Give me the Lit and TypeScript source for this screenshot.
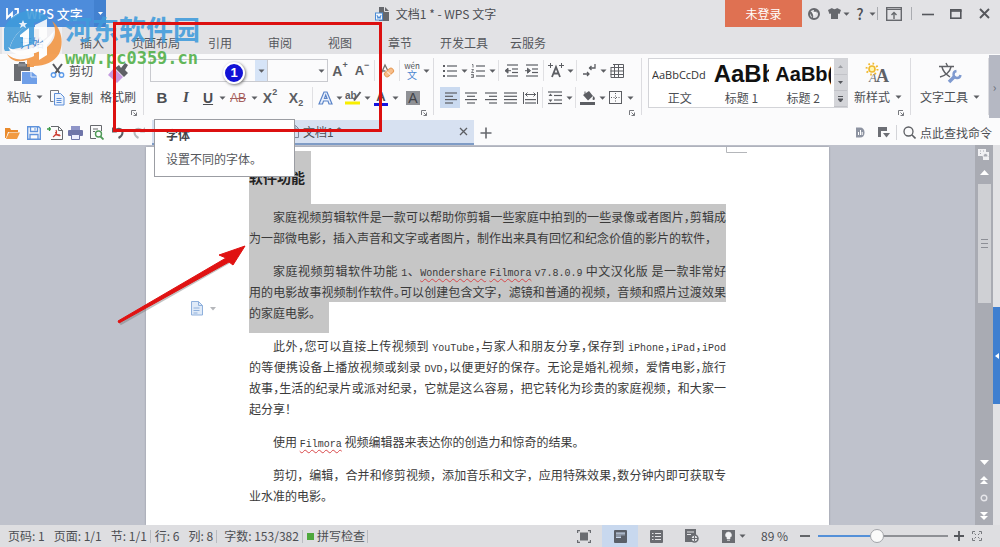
import { LitElement, html, svg, css, TemplateResult } from "lit";
import { customElement } from "lit/decorators.js";

type Icon = TemplateResult;

const box = (w: number, h: number, body: Icon) =>
  html`<svg width=${w} height=${h} viewBox="0 0 ${w} ${h}" fill="none" aria-hidden="true">${body}</svg>`;

const G = "#5c5e63";
const BLUE = "#5b84c8";

const lines = (rows: number[][]) =>
  rows.map(([x1, x2, y]) => svg`<path d="M${x1} ${y}H${x2}" stroke=${G} stroke-width="1.2"/>`);

const caret = box(7, 4, svg`<path d="M0.5 0.5h6L3.5 3.8z" fill="#5c5e63"/>`);
const launcherIcon = box(6, 6, svg`<path d="M0.5 5V0.5H5M2.5 5.5h3v-3M2.5 2.5l3 3" stroke="#77797e"/>`);

const icons = {
  wps: box(14, 12, svg`<path d="M1 0v10l5-5v5l6-4.500V1H8.500" stroke="#fff" stroke-width="1.8"/>`),
  paste: box(24, 24, svg`
    <path d="M1 3h5V1h6v2h5v7H8v10H1z" fill="#6b6d72"/><path d="M5 2.500h8v3H5z" fill="#8b8d92"/>
    <path d="M9 11h10l5 4v8H9z" fill="#6f9fe8"/><path d="M18 11v5h6" stroke="#dfe9fa"/>`),
  cut: box(15, 15, svg`
    <path d="M3 1l7 9.500M12 1L5 10.500" stroke="#55575c" stroke-width="2"/>
    <circle cx="3.500" cy="12" r="2.200" stroke="#5d9bea" stroke-width="1.400"/><circle cx="11.500" cy="12" r="2.200" stroke="#5d9bea" stroke-width="1.400"/>`),
  copy: box(15, 16, svg`
    <path d="M3.500 11.500h-3v-11h8v3" stroke="#76797f"/><path d="M4.500 3.500h6l3.500 3.500v8H4.500z" fill="#eaf2fd" stroke="#5d8fd8"/>
    <path d="M6.500 8.500h5M6.500 10.500h5M6.500 12.500h5" stroke="#5d8fd8"/>`),
  brush: box(24, 24, svg`
    <path d="M9 7l4-3 2 3 4-5 3 2-3 5 3 3-4 4z" fill="#5f6166"/><path d="M8 7l9 9-6 6-9-8z" fill="#c59be0"/>`),
  eraser: box(16, 16, svg`
    <path d="M2 11L6 2l2.500 5M3.500 8h3" stroke="#77706a" stroke-width="1.300"/><rect x="5" y="7" width="10" height="5" rx="2" transform="rotate(-42 10 9.500)" fill="#f7bd8a" stroke="#e69a55"/><path d="M8 8.500l4 4" stroke="#fff"/>`),
  pinyin: html`<span class="pinyin"><span>wén</span><span class="blue">文</span></span>`,
  bullets: box(14, 14, svg`${lines([[4, 14, 2], [4, 14, 7], [4, 14, 12]])}<path d="M0 2h2M0 7h2M0 12h2" stroke=${G} stroke-width="2"/>`),
  numbers: box(14, 14, svg`${lines([[5, 14, 2], [5, 14, 7], [5, 14, 12]])}<path d="M1 0.500h1v3M0.500 5.500h2l-2 3h2.500M0 10.500h2.500v3H0M0.500 12h2" stroke=${G} stroke-width=".8"/>`),
  outdent: box(13, 14, svg`${lines([[2, 13, 1], [7, 13, 5], [7, 13, 8.500], [2, 13, 12]])}<path d="M0 6.700l3-2.500v5zM3 6.700h3" fill=${G} stroke=${G}/>`),
  indent: box(13, 14, svg`${lines([[1, 13, 1], [7, 13, 5], [7, 13, 8.500], [1, 13, 12]])}<path d="M5.500 6.700l-3-2.500v5zM0 6.700h3" fill=${G} stroke=${G}/>`),
  scaleText: box(16, 15, svg`<path d="M4 14L8 4l4 10M5.500 10.500h5" stroke=${G} stroke-width="1.800"/><path d="M0 2.500h5M2.500 0v5M11 2.500h5M13.500 0v5" stroke=${G}/>`),
  wrap: box(13, 14, svg`<path d="M12 0v4H6M8.500 2L6.500 4l2 2M0 10h6M4 8l2 2-2 2" stroke=${G} stroke-width="1.300"/>`),
  table: box(14, 14, svg`<path d="M4.500 0.500v13M8.500 0.500v13M0.500 3.500h13M0.500 7h13M0.500 10.500h13M3 0.500h10.500v13H1V4" stroke=${G}/>`),
  left: box(13, 12, svg`${lines([[1, 13, 1], [1, 9, 4.300], [1, 13, 7.600], [1, 9, 11]])}`),
  center: box(13, 12, svg`${lines([[1, 13, 1], [3, 11, 4.300], [1, 13, 7.600], [3, 11, 11]])}`),
  right: box(13, 12, svg`${lines([[1, 13, 1], [5, 13, 4.300], [1, 13, 7.600], [5, 13, 11]])}`),
  justify: box(13, 12, svg`${lines([[0, 13, 1], [0, 13, 4.300], [0, 13, 7.600], [0, 13, 11]])}`),
  spread: box(15, 12, svg`${lines([[2, 13, 7.600], [2, 13, 11]])}<path d="M0.500 0v12M14.500 0v12M2 2.500h11M4.500 0.500l-2 2 2 2M10.500 0.500l2 2-2 2" stroke=${G}/>`),
  spacing: box(14, 14, svg`${lines([[0, 14, 1], [6, 14, 4.500], [6, 14, 9], [0, 14, 12.500]])}<path d="M2.500 2.500l2 2.500h-4zM2.500 11l2-2.500h-4z" fill=${G}/>`),
  bucket: box(16, 15, svg`<path d="M3 5l6-4 4 5-5 4.500z" fill=${G}/><path d="M5 6V1.500" stroke=${G}/><path d="M13.500 6c2 2 1.500 4 0 4s-1-2 0-4z" fill=${G}/><rect y="12" width="15" height="3" fill=${G}/>`),
  border: box(14, 14, svg`<rect x=".5" y=".5" width="12" height="12" stroke=${G}/><path d="M6.500 2v10M2 6.500h10" stroke=${G} stroke-dasharray="1 1.500"/>`),
  outlineA: box(15, 14, svg`<path d="M1 13L6 1h3l5 12h-3l-1-3H5.500l-1 3zM6.500 7.500h2.500L7.700 4z" fill="#e9f0fc" stroke=${BLUE} stroke-width="1.200"/>`),
  marker: box(17, 15, svg`<text x="0" y="9" font-family="Liberation Sans" font-size="10" font-weight="700" fill=${G}>ab</text><path d="M15.500 2L9 10.500" stroke=${G} stroke-width="2"/><rect y="11.500" width="15" height="3" fill="#f8ee00"/>`),
  newStyle: box(26, 22, svg`
    <text x="11" y="20" font-family="Liberation Serif" font-size="18" font-weight="700" fill="#5f6166">A</text>
    <text x="4" y="20" font-family="Liberation Serif" font-size="13" font-style="italic" fill="#6a6c70">A</text>
    <circle cx="7" cy="7" r="3" fill="#fff6b0" stroke="#f0b92e" stroke-width="1.600"/>
    <circle cx="7" cy="7" r="5.500" stroke="#f0b92e" stroke-width="2" stroke-dasharray="1.600 2.700"/>`),
  textTool: box(24, 22, svg`
    <path d="M1 4.500h15M8 1l1.500 3M4 5c1 5 5 8 8 10M13 5c-1 5-6 9-11 10" stroke="#5f6166" stroke-width="1.400"/>
    <path d="M11 20l6-6" stroke="#7f9ad0" stroke-width="3.500"/><path d="M18.500 9a3.500 3.500 0 1 0 4 4" stroke="#7f9ad0" stroke-width="2.400"/>`),
  folder: box(15, 12, svg`<path d="M0 1h5l1 2h7v2H3l-2 6H0z" fill="#e98a2c"/><path d="M4 5.500h11L12 12H1z" fill="#f29b42"/>`),
  save: box(14, 14, svg`<path d="M.7.700h11l1.600 1.600v11H.7z" stroke="#5f93dc" stroke-width="1.400"/><path d="M3.500 1v4.500h7V1M3 13V8.500h8V13" stroke="#5f93dc" stroke-width="1.300"/><path d="M8 2v2.500" stroke="#5f93dc"/>`),
  pdf: box(16, 14, svg`<path d="M4 .5h7.500l4 4v9H4M11.500.5v4h4" stroke="#66686d"/><path d="M0 3h4M2.500 1v4" stroke="#3d9a48" stroke-width="1.300"/><path d="M6 11c3-2 4-5 3-7M8.500 6c1 3 3 4 5 3.500M7 9.500c2-1 4-1 6-.5" stroke="#cc3f35" stroke-width="1.200"/>`),
  print: box(15, 14, svg`<path d="M3 0h9v4H3z" fill="#8f95c8"/><rect y="4" width="15" height="6" rx="1" fill="#6f75a9"/><path d="M3.500 8.500h8v5h-8z" fill="#eef" stroke="#6f75a9"/>`),
  preview: box(14, 15, svg`<path d="M6 13.500H.5V.5h11V6M3 4h5M3 6.500h2" stroke="#66686d"/><circle cx="8.500" cy="9" r="3" stroke="#4f9a57" stroke-width="1.400"/><path d="M10.500 11.500l3 3" stroke="#4f9a57" stroke-width="1.800"/>`),
  undo: box(14, 13, svg`<path d="M1 1v5.500h5z" fill=${G}/><path d="M3 5c4-4 9-2 8.500 2-.2 2.500-2 4-4 5" stroke=${G} stroke-width="2"/>`),
  redo: box(14, 13, svg`<path d="M13 1v5.500H8z" fill="#b7b9bd"/><path d="M11 5C7 1 2 3 2.500 7c.2 2.500 2 4 4 5" stroke="#b7b9bd" stroke-width="2"/>`),
  docIcon: box(10, 13, svg`<path d="M.5.5h6l3 3v9h-9zM6 .5V4h3.500" stroke="#7c8698"/>`),
  close: box(9, 9, svg`<path d="M1 1l7 7M8 1L1 8" stroke="#5c5e63" stroke-width="1.300"/>`),
  plus: box(12, 12, svg`<path d="M6 0.500v11M0.500 6h11" stroke="#66686d" stroke-width="1.600"/>`),
  dBadge: box(10, 11, svg`<path d="M1 .5h4c3 0 4.500 2 4.500 5s-1.500 5-4.500 5H1z" fill="#8d93a1"/><path d="M3.500 8V5M5.500 8V3M7.200 8V5" stroke="#fff"/>`),
  flag: box(12, 11, svg`<path d="M0 0h9v4H3v6H0z" fill="#6d6f75"/><path d="M5 6h7l-3.500 4.500z" fill="#6d6f75"/>`),
  search: box(13, 13, svg`<circle cx="5.500" cy="5.500" r="4.500" stroke=${G} stroke-width="1.300"/><path d="M8.800 8.800l3.700 3.700" stroke=${G} stroke-width="1.600"/>`),
  titleDoc: box(14, 14, svg`<path d="M4 0h6l4 4v10H4z" fill="#66686d"/><path d="M9.500 0v4.500H14" stroke="#e2e2e5"/><rect x=".5" y="6" width="7" height="7" fill="#f3f7fd" stroke="#4a8bd6"/><path d="M2 8l1 3.500 1-2 1 2L6 8" stroke="#4a8bd6"/>`),
  globe: box(12, 12, svg`<circle cx="6" cy="6" r="5" stroke="#66686d" stroke-width="2"/><path d="M1 3.500l4 1.500L4.500 10M7 1l-1 3h5" fill="#66686d" stroke="#66686d"/><path d="M3.500 3.800h5.500L6 8.500z" fill="#f2f2f4"/>`),
  shirt: box(13, 11, svg`<path d="M4 0c1 1.500 4 1.500 5 0l4 2-1.500 4-1.500-.5V11H3V5.500L1.500 6 0 2z" fill="#66686d"/>`),
  ribbonUp: box(16, 14, svg`<rect x=".7" y=".7" width="14.600" height="12.600" stroke="#66686d" stroke-width="1.400"/><path d="M0 2.500h16" stroke="#66686d"/><path d="M8 12V6M5.500 8L8 5.500 10.500 8" stroke="#66686d" stroke-width="1.400"/>`),
  min: box(12, 10, svg`<path d="M0 5.500h12" stroke="#55575c" stroke-width="1.600"/>`),
  max: box(12, 10, svg`<rect x=".8" y=".8" width="10" height="8.400" stroke="#55575c" stroke-width="1.600"/><path d="M0 2h11.600" stroke="#55575c" stroke-width="1.600"/>`),
  exit: box(11, 11, svg`<path d="M1 1l9 9M10 1l-9 9" stroke="#55575c" stroke-width="1.900"/>`),
  full: box(14, 13, svg`<rect x="3" y="2.500" width="8" height="8" fill="#6a6c71"/><path d="M.6 3V.6H3M11 .6h2.400V3M13.400 10v2.400H11M3 12.400H.6V10" stroke="#6a6c71" stroke-width="1.200"/>`),
  page: box(13, 13, svg`<rect width="13" height="13" rx="1" fill="#5a5f68"/><path d="M2 3h9v2.500H7v2H2z" fill="#8d97a6"/><path d="M2 3h9M2 7.500h5" stroke="#c9d8ec"/>`),
  outline: box(13, 13, svg`<rect width="13" height="13" rx="1" fill="#6a6c71"/><path d="M2 3.500h1.500M5 3.500h6M2 6.500h1.500M5 6.500h6M2 9.500h1.500M5 9.500h6" stroke="#e4e4e7" stroke-width="1.200"/>`),
  web: box(14, 14, svg`<path d="M0 0h11v13H0z" fill="#6a6c71"/><path d="M2 3h7M2 5.500h4" stroke="#e4e4e7"/><circle cx="9.500" cy="9.500" r="3.500" fill="#e4e4e7" stroke="#6a6c71" stroke-width="1.500"/><path d="M6 9.500h7M9.500 7v5" stroke="#6a6c71"/>`),
  bulb: box(13, 13, svg`<rect width="13" height="13" fill="#6a6c71"/><path d="M6.500 2a3 3 0 0 1 1.500 5.600V9H5V7.600A3 3 0 0 1 6.500 2zM5 10.500h3" fill="#f2f2f4" stroke="#f2f2f4" stroke-width=".6"/>`),
  minus: box(10, 10, svg`<path d="M0 5h10" stroke="#55575c" stroke-width="1.800"/>`),
  plusBold: box(10, 10, svg`<path d="M0 5h10M5 0v10" stroke="#55575c" stroke-width="1.800"/>`),
  expand: box(10, 10, svg`<path d="M.5 3V.5H3M7 .5h2.500V3M9.500 7v2.500H7M3 9.500H.5V7M2.500 2.500l1.500 1.500M7.500 2.500L6 4M7.500 7.500L6 6M2.500 7.500L4 6" stroke="#77797e"/>`),
  region: box(12, 11, svg`<path d="M0 0h8v3h3v4H0z" fill="#f0f0f3"/><path d="M2 2h1M5 2h1M2 4.500h1" stroke="#a8aab2"/><circle cx="7.500" cy="7" r="2.500" fill="#a8aab2" stroke="#f0f0f3"/><path d="M5 7.500h6V11H5z" fill="#f0f0f3"/>`),
  up: box(9, 5, svg`<path d="M4.500 0L9 5H0z" fill="#fff"/>`),
  down: box(9, 5, svg`<path d="M4.500 5L9 0H0z" fill="#fff"/>`),
  pageUp: box(8, 8, svg`<path d="M4 0l4 4H0zM4 4l4 4H0z" fill="#fff"/>`),
  pageDown: box(8, 8, svg`<path d="M4 8l4-4H0zM4 4l4-4H0z" fill="#fff"/>`),
  ring: box(8, 8, svg`<circle cx="4" cy="4" r="2.800" stroke="#e6e6ea" stroke-width="1.400"/>`),
  sideArrow: box(4, 6, svg`<path d="M0 3l4-3v6z" fill="#fff"/>`),
  pasteOption: box(13, 15, svg`<path d="M.5.500h7l4 4v9.500H.5z" fill="#dfeaf8" stroke="#8fb0dc"/><path d="M7.500.5v4h4M2.500 7h6M2.500 9.500h6M2.500 12h4" stroke="#8fb0dc"/>`),
  crop: box(21, 6, svg`<path d="M.5 0v5.500H21" stroke="#b4b6ba"/>`),
};

const base = css`
  * { box-sizing: border-box; }
  svg { display: block; flex: none; }
  button {
    display: flex; align-items: center; justify-content: center;
    margin: 0; padding: 0; border: 0; background: none;
    font: inherit; color: inherit; white-space: nowrap;
  }
`;

@customElement("title-bar")
class TitleBar extends LitElement {
  static styles = [base, css`
    :host { display: flex; align-items: center; height: 27px; background: #e2e2e5; color: #4c4e53; }
    .app { height: 27px; width: 106px; gap: 6px; padding-left: 6px; justify-content: flex-start; background: #4d8cdb; color: #fff; font-size: 13px; font-weight: 500; }
    .app .tail { margin-left: auto; align-self: stretch; width: 12px; display: flex; align-items: center; justify-content: center; background: #4281d0; }
    .name { flex: 1; display: flex; gap: 7px; align-items: center; justify-content: center; padding-left: 40px; }
    .login { align-self: stretch; width: 77px; background: #df7152; color: #fff; }
    .i { width: 16px; height: 27px; }
    .wide { width: 32px; }
    .mid { width: 24px; }
    .dd { width: 8px; height: 27px; }
    .help { margin-left: 2px; font-size: 15px; font-weight: 500; }
    .bar { width: 1px; height: 13px; margin-left: 1px; background: #a9abb0; }
  `];
  render() {
    return html`
      <button class="app">${icons.wps}<span>WPS 文字</span><span class="tail">${box(5, 3, svg`<path d="M0 0h5L2.500 3z" fill="#fff"/>`)}</span></button>
      <div class="name">${icons.titleDoc}<span>文档1 * - WPS 文字</span></div>
      <button class="login">未登录</button>
      <button class="i mid" aria-label="在线">${icons.globe}</button>
      <button class="i" aria-label="皮肤">${icons.shirt}</button><button class="dd" aria-label="皮肤选项">${caret}</button>
      <button class="i help" aria-label="帮助">?</button><button class="dd" aria-label="帮助选项">${caret}</button>
      <span class="bar"></span>
      <button class="i wide" aria-label="隐藏功能区">${icons.ribbonUp}</button>
      <span class="bar"></span>
      <button class="i wide" aria-label="最小化">${icons.min}</button>
      <button class="i mid" aria-label="最大化">${icons.max}</button>
      <button class="i wide" aria-label="关闭">${icons.exit}</button>`;
  }
}

@customElement("menu-tabs")
class MenuTabs extends LitElement {
  static styles = [base, css`
    :host { display: block; background: #e2e2e5; color: #55575c; padding-left: 2px; }
    nav { display: flex; height: 27px; }
    button { min-width: 60px; padding: 0 10px; padding-top: 4px; }
    .on { background: #efeff2; color: #4a86d0; }
  `];
  render() {
    const tabs = ["开始", "插入", "页面布局", "引用", "审阅", "视图", "章节", "开发工具", "云服务"];
    return html`<nav>${tabs.map((t, i) => html`<button class=${i === 0 ? "on" : ""}>${t}</button>`)}</nav>`;
  }
}

const tool = (label: string, icon: unknown, cls = "") =>
  html`<button class="t ${cls}" aria-label=${label} title=${label}>${icon}</button>`;
const more = (label: string) => html`<button class="dd" aria-label="${label}选项">${caret}</button>`;
const sep = html`<span class="sep"></span>`;

@customElement("tool-ribbon")
class ToolRibbon extends LitElement {
  static styles = [base, css`
    :host { display: flex; height: 66px; background: #fbfbfc; color: #4c4e53; }
    .group { position: relative; display: flex; padding-top: 3px; }
    .group::after { content: ""; position: absolute; right: 0; top: 4px; bottom: 5px; width: 1px; background: #dcdce0; }
    .launch { position: absolute; right: 7px; bottom: 4px; }
    .row { display: flex; align-items: center; height: 27px; }
    .t { width: 20px; height: 21px; }
    .w24 { width: 24px; }
    .w28 { width: 28px; }
    .dd { width: 8px; height: 21px; }
    .on { background: #cadaf0; }
    .sep { width: 1px; height: 21px; margin: 0 2px; background: #e0e0e3; }
    .big { flex-direction: column; height: 54px; justify-content: flex-start; }
    .big .pic { height: 31px; display: flex; align-items: center; }
    .big .cap { display: flex; align-items: center; gap: 5px; line-height: 18px; }
    .clip { padding-left: 7px; padding-right: 8px; gap: 7px; }
    .clip .big { width: 36px; }
    .clip .row { gap: 4px; }
    .font { padding-left: 6px; padding-right: 4px; }
    .para { padding-left: 6px; padding-right: 8px; }
    .styles { padding-left: 6px; padding-right: 9px; gap: 6px; }
    .tools { padding-left: 9px; padding-right: 9px; }
    .combo { position: relative; width: 118px; height: 23px; border: 1px solid #c9cacf; background: #fbfbfc; }
    .size { width: 60px; border-left: 0; }
    .combo select { appearance: none; width: 100%; height: 100%; border: 0; background: none; font: inherit; padding: 0 4px; }
    .combo .arrow { position: absolute; right: 0; top: 0; bottom: 0; width: 12px; display: flex; align-items: center; justify-content: center; pointer-events: none; }
    .combo .hot { background: #d6e4f7; }
    .bold { font: 700 15px "Liberation Sans", sans-serif; }
    .italic { font: italic 700 15px "Liberation Serif", serif; }
    .under { font: 700 14px "Liberation Sans", sans-serif; text-decoration: underline; }
    .strike { font: 12px "Liberation Sans", sans-serif; text-decoration: line-through; color: #a6605c; }
    .let { font: 700 14px "Liberation Sans", sans-serif; color: #5c5e63; }
    .let small { font-size: 9px; align-self: flex-start; }
    .let .low { align-self: flex-end; }
    .smaller { font-size: 13px; }
    .inked { border-bottom: 3px solid #1414e0; padding: 0 2px; font: 700 13px/13px "Liberation Sans", sans-serif; }
    .shade { background: #8f9196; padding: 0 2px; font: 14px/14px "Liberation Sans", sans-serif; color: #404247; }
    .pinyin { display: flex; flex-direction: column; align-items: center; font-size: 8px; line-height: 8px; }
    .pinyin .blue { color: #4a86d0; font-size: 10px; line-height: 10px; }
    .gallery { display: flex; width: 200px; height: 50px; margin-top: 1px; border: 1px solid #d3d4d8; background: #fff; }
    .style { flex: 1; flex-direction: column; justify-content: flex-end; overflow: hidden; padding: 0 3px; }
    .style .demo { width: 100%; height: 30px; display: flex; align-items: center; overflow: hidden; color: #111; font: 700 20px "Liberation Sans", sans-serif; }
    .style:nth-child(1) .demo { color: #333; font: 11px "Open Sans", sans-serif; }
    .style:nth-child(2) .demo { font-size: 24px; }
    .style .nm { line-height: 18px; }
    .scroll { width: 13px; display: flex; flex-direction: column; background: #d4d5d9; }
    .scroll button { flex: 1; border-bottom: 1px solid #c2c3c8; }
    .edge { margin-left: auto; width: 13px; height: 63px; margin-top: 1px; background: #b5b8c3; color: #6b6e78; }
  `];
  private launch(label: string) {
    return html`<button class="launch" aria-label=${label}>${launcherIcon}</button>`;
  }
  render() {
    const chars = [["AaBbCcDd", "正文"], ["AaBb", "标题 1"], ["AaBb(", "标题 2"]];
    return html`
      <div class="group clip">
        <button class="big"><span class="pic">${icons.paste}</span><span class="cap">粘贴${caret}</span></button>
        <div>
          <button class="row">${icons.cut}<span>剪切</span></button>
          <button class="row">${icons.copy}<span>复制</span></button>
        </div>
        <button class="big"><span class="pic">${icons.brush}</span><span class="cap">格式刷</span></button>
        ${this.launch("剪贴板设置")}
      </div>
      <div class="group font">
        <div>
          <div class="row">
            <span class="combo"><select aria-label="字体"><option></option></select><span class="arrow hot">${caret}</span></span>
            <span class="combo size"><select aria-label="字号"><option></option></select><span class="arrow">${caret}</span></span>
            ${tool("增大字号", html`A<small>+</small>`, "w24 let")}${tool("缩小字号", html`A<small>−</small>`, "let smaller")}
            ${sep}${tool("清除格式", icons.eraser)}${sep}${tool("拼音指南", icons.pinyin)}${more("拼音指南")}
          </div>
          <div class="row">
            ${tool("加粗", "B", "w24 bold")}${tool("倾斜", "I", "w24 italic")}${tool("下划线", "U", "under")}${more("下划线")}
            ${tool("删除线", "AB", "w24 strike")}${more("删除线")}
            ${tool("上标", html`X<small>2</small>`, "w24 let")}${tool("下标", html`X<small class="low">2</small>`, "w28 let")}
            ${sep}${tool("文字效果", icons.outlineA)}${more("文字效果")}${tool("突出显示", icons.marker)}${more("突出显示")}
            ${tool("字体颜色", html`<span class="inked">A</span>`)}${more("字体颜色")}${tool("字符底纹", html`<span class="shade">A</span>`, "w28")}
          </div>
        </div>
        ${this.launch("字体设置")}
      </div>
      <div class="group para">
        <div>
          <div class="row">
            ${tool("项目符号", icons.bullets)}${more("项目符号")}${tool("编号", icons.numbers)}${more("编号")}${sep}
            ${tool("减少缩进", icons.outdent)}${tool("增加缩进", icons.indent)}${sep}
            ${tool("中文版式", icons.scaleText)}${more("中文版式")}${sep}
            ${tool("显示标记", icons.wrap)}${more("显示标记")}${tool("插入表格", icons.table)}
          </div>
          <div class="row">
            ${tool("左对齐", icons.left, "on")}${tool("居中", icons.center)}${tool("右对齐", icons.right)}${tool("两端对齐", icons.justify)}${tool("分散对齐", icons.spread)}${sep}
            ${tool("行距", icons.spacing)}${more("行距")}${sep}
            ${tool("底纹颜色", icons.bucket)}${more("底纹颜色")}${tool("边框", icons.border)}${more("边框")}
          </div>
        </div>
        ${this.launch("段落设置")}
      </div>
      <div class="group styles">
        <div class="gallery">
          ${chars.map(([demo, nm]) => html`<button class="style"><span class="demo">${demo}</span><span class="nm">${nm}</span></button>`)}
          <div class="scroll">
            <button aria-label="上一行">${box(5, 3, svg`<path d="M2.500 0L5 3H0z" fill="#9c9ea3"/>`)}</button>
            <button aria-label="下一行">${box(5, 3, svg`<path d="M2.500 3L5 0H0z" fill="#55575c"/>`)}</button>
            <button aria-label="更多样式">${box(5, 6, svg`<path d="M0 .5h5M2.500 6L5 3H0z" fill="#55575c" stroke="#55575c"/>`)}</button>
          </div>
        </div>
        <button class="big"><span class="pic">${icons.newStyle}</span><span class="cap">新样式${caret}</span></button>
        ${this.launch("样式设置")}
      </div>
      <div class="group tools">
        <button class="big"><span class="pic">${icons.textTool}</span><span class="cap">文字工具${caret}</span></button>
      </div>
      <button class="edge" aria-label="更多功能">›</button>`;
  }
}

@customElement("quick-bar")
class QuickBar extends LitElement {
  static styles = [base, css`
    :host { display: flex; align-items: center; height: 25px; background: #fbfbfc; color: #4c4e53; padding-left: 2px; padding-right: 8px; }
    .q { width: 21px; height: 25px; }
    .tab { align-self: stretch; display: flex; align-items: center; gap: 4px; width: 322px; margin-left: 3px; padding-left: 137px; padding-right: 6px; background: #d7e1f1; border-bottom: 2px solid #7f9cc6; }
    .tab .x { margin-left: auto; width: 9px; }
    .fill { flex: 1; }
    .r { width: 24px; height: 25px; }
    .bar { width: 1px; height: 15px; background: #d3d4d8; }
    .find { gap: 4px; padding-left: 6px; }
  `];
  render() {
    const q: [string, unknown][] = [["打开", icons.folder], ["保存", icons.save], ["输出为PDF", icons.pdf], ["打印", icons.print], ["打印预览", icons.preview], ["撤销", icons.undo], ["恢复", icons.redo]];
    return html`
      ${q.map(([l, i]) => html`<button class="q" aria-label=${l}>${i}</button>`)}
      <div class="tab">${icons.docIcon}<span>文档1 *</span><button class="x" aria-label="关闭文档">${icons.close}</button></div>
      <button class="r" aria-label="新建文档">${icons.plus}</button>
      <span class="fill"></span>
      <button class="r" aria-label="文档助手">${icons.dBadge}</button>
      <button class="r" aria-label="切换窗口">${icons.flag}</button>
      <span class="bar"></span>
      <button class="find">${icons.search}<span>点此查找命令</span></button>`;
  }
}

const c = html`<span class="half">，</span>`;
const en = (t: string) => html`<span class="en">${t}</span>`;
const bad = (t: string) => html`<span class="en bad">${t}</span>`;

@customElement("doc-area")
class DocArea extends LitElement {
  static styles = [base, css`
    :host { display: flex; min-height: 0; overflow: hidden; background: #bfc2cc; }
    .desk { flex: 1; min-width: 0; display: flex; justify-content: center; padding-top: 2px; }
    .paper { position: relative; width: 683px; flex: none; padding: 4px 103px 0; background: #fff; color: #3a3a3a; box-shadow: 0 0 2px #8f929c; }
    h1 { margin: 0; width: 62px; height: 53px; font-size: 14px; font-weight: 700; line-height: 53px; background: #c6c6c6; white-space: nowrap; color: #222; }
    p { margin: 0 0 12px; line-height: 21px; }
    .ln { display: block; height: 21px; white-space: nowrap; }
    .ln:first-child { padding-left: 24px; }
    .ln:not(:last-child) { text-align-last: justify; }
    .sel { background: #c6c6c6; }
    .first { padding: 2px 0 12px; margin: 0; }
    .second { margin-bottom: 2px; }
    .tail { width: 80px; height: 31px; }
    .half { font-feature-settings: "halt"; }
    .en { font-family: "Liberation Mono", monospace; font-size: 10px; line-height: 10px; }
    .bad { text-decoration: underline wavy #d8484a 1px; text-underline-offset: 2px; }
    .opt { position: absolute; left: 45px; top: 154px; gap: 6px; }
    .crop { position: absolute; right: 82px; top: 0; }
    .scroll { width: 18px; display: flex; flex-direction: column; align-items: center; background: #a9abb3; }
    .scroll button { width: 18px; height: 18px; }
    .thumb { width: 13px; flex: 0 1 119px; margin-top: 3px; gap: 1px; display: flex; flex-direction: column; align-items: center; justify-content: center; background: #cfd0d4; }
    .thumb i { width: 7px; height: 1px; margin: 1px; background: #8d8f96; }
    .fill { flex: 1; }
    .side { width: 7px; background: #e2e2e5; padding-top: 162px; }
    .side button { width: 7px; height: 97px; background: #3f7fd0; }
  `];
  render() {
    return html`
      <div class="desk">
        <article class="paper">
          <h1>软件功能</h1>
          <p class="first sel">
            <span class="ln">家庭视频剪辑软件是一款可以帮助你剪辑一些家庭中拍到的一些录像或者图片${c}剪辑成</span>
            <span class="ln">为一部微电影，插入声音和文字或者图片，制作出来具有回忆和纪念价值的影片的软件${c}</span>
          </p>
          <p class="second">
            <span class="ln sel">家庭视频剪辑软件功能 ${en("1")}、${bad("Wondershare")} ${bad("Filmora")} ${en("v7.8.0.9")} 中文汉化版 是一款非常好</span>
            <span class="ln sel">用的电影故事视频制作软件<span class="half">。</span>可以创建包含文字，滤镜和普通的视频，音频和照片过渡效果</span>
            <span class="ln sel tail">的家庭电影。</span>
          </p>
          <p>
            <span class="ln">此外${c}您可以直接上传视频到 ${en("YouTube")}${c}与家人和朋友分享${c}保存到 ${en("iPhone")}${c}${en("iPad")}${c}${en("iPod")}</span>
            <span class="ln">的等便携设备上播放视频或刻录 ${en("DVD")}${c}以便更好的保存。无论是婚礼视频，爱情电影${c}旅行</span>
            <span class="ln">故事${c}生活的纪录片或派对纪录，它就是这么容易，把它转化为珍贵的家庭视频，和大家一</span>
            <span class="ln">起分享！</span>
          </p>
          <p><span class="ln">使用 ${bad("Filmora")} 视频编辑器来表达你的创造力和惊奇的结果。</span></p>
          <p>
            <span class="ln">剪切，编辑，合并和修剪视频，添加音乐和文字，应用特殊效果${c}数分钟内即可获取专</span>
            <span class="ln">业水准的电影。</span>
          </p>
          <button class="opt" aria-label="粘贴选项">${icons.pasteOption}${box(6, 4, svg`<path d="M0 0h6L3 3.500z" fill="#b5b7bb"/>`)}</button>
          <span class="crop">${icons.crop}</span>
        </article>
      </div>
      <div class="scroll">
        <button aria-label="视图切换">${icons.region}</button>
        <button aria-label="向上滚动">${icons.up}</button>
        <div class="thumb"><i></i><i></i><i></i></div>
        <span class="fill"></span>
        <button aria-label="向下滚动">${icons.down}</button>
        <button aria-label="上一页">${icons.pageUp}</button>
        <button aria-label="选择浏览对象">${icons.ring}</button>
        <button aria-label="下一页">${icons.pageDown}</button>
      </div>
      <div class="side"><button aria-label="展开任务窗格">${icons.sideArrow}</button></div>`;
  }
}

@customElement("status-bar")
class StatusBar extends LitElement {
  static styles = [base, css`
    :host { display: flex; align-items: center; height: 22px; background: #dedee1; color: #4c4e53; padding-left: 8px; padding-right: 12px; white-space: nowrap; }
    .s { margin-right: 9px; }
    .tight { margin-right: 3px; }
    .bar { width: 1px; height: 13px; margin-right: 4px; background: #b9bbc0; }
    .wide { margin-right: 7px; }
    .spell { gap: 3px; margin-right: 2px; }
    .dot { width: 7px; height: 7px; background: #4fa83d; }
    .fill { flex: 1; }
    .v { width: 36px; height: 22px; }
    .on { background: #c8d8ee; }
    .dd { width: 8px; margin-left: -8px; }
    .pct { width: 44px; padding-left: 15px; margin-right: 8px; }
    .z { width: 14px; height: 22px; }
    .exp { width: 22px; height: 22px; }
    input { appearance: none; width: 130px; height: 16px; margin: 0 4px 0 6px; background: none; }
    input::-webkit-slider-runnable-track { height: 2px; background: linear-gradient(90deg, #5490d8 45%, #8e9095 45%); }
    input::-webkit-slider-thumb { appearance: none; width: 14px; height: 14px; margin-top: -6px; border-radius: 50%; background: #fafafa; border: 1px solid #a2a4a9; }
  `];
  render() {
    return html`
      <span class="s">页码: 1</span><span class="s">页面: 1/1</span><span class="s tight">节: 1/1</span><span class="bar"></span>
      <span class="s">行: 6</span><span class="s tight">列: 8</span><span class="bar wide"></span>
      <span class="s tight">字数: 153/382</span><span class="bar"></span>
      <button class="spell"><span class="dot"></span>拼写检查</button><span class="bar"></span>
      <span class="fill"></span>
      <button class="v" aria-label="全屏显示">${icons.full}</button>
      <button class="v on" aria-label="页面视图">${icons.page}</button>
      <button class="v" aria-label="大纲视图">${icons.outline}</button>
      <button class="v" aria-label="Web版式">${icons.web}</button>
      <button class="v" aria-label="护眼模式">${icons.bulb}</button>
      <button class="dd" aria-label="护眼模式选项">${caret}</button>
      <span class="pct">89 %</span>
      <button class="z" aria-label="缩小">${icons.minus}</button>
      <input type="range" min="0" max="100" value="45" aria-label="显示比例" />
      <button class="z" aria-label="放大">${icons.plusBold}</button>
      <button class="exp" aria-label="最佳显示比例">${icons.expand}</button>`;
  }
}

@customElement("app-root")
class AppRoot extends LitElement {
  static styles = [base, css`
    :host { position: relative; display: flex; flex-direction: column; height: 100vh; overflow: hidden; font: 12px/16px "Noto Sans CJK SC", sans-serif; }
    doc-area { flex: 1; }
    .tip { position: absolute; left: 154px; top: 119px; width: 141px; height: 58px; padding: 7px 11px; border: 1px solid #9b9da3; background: #fff; color: #55575c; }
    .tip b { display: block; line-height: 16px; margin-bottom: 8px; color: #44464b; }
    .frame { position: absolute; left: 113px; top: 22px; width: 269px; height: 110px; border: 3px solid #dc1010; }
    .badge { position: absolute; left: 223px; top: 62px; width: 22px; height: 22px; border: 2px solid #fff; border-radius: 50%; background: #1212d6; color: #fff; font: 700 13px/18px "Liberation Sans", sans-serif; text-align: center; box-shadow: 1px 1px 3px #777; }
    .arrow { position: absolute; left: 114px; top: 240px; }
    .mark { position: absolute; left: 4px; top: 10px; display: flex; gap: 3px; opacity: .88; }
    .site { padding-top: 4px; color: #3f9bdb; font: 700 27px/30px "Noto Sans CJK SC", sans-serif; }
    .url { margin-top: 4px; color: #4fae45; font: 700 17px/20px "DejaVu Sans Mono", monospace; }
    .site, .url { white-space: nowrap; }
  `];
  render() {
    return html`
      <title-bar></title-bar>
      <menu-tabs></menu-tabs>
      <tool-ribbon></tool-ribbon>
      <quick-bar></quick-bar>
      <doc-area></doc-area>
      <status-bar></status-bar>
      <div class="tip" role="tooltip"><b>字体</b>设置不同的字体。</div>
      <div class="mark">
        ${box(58, 58, svg`
          <path d="M1 41A28 28 0 0 1 45 8L38 11C22 13 8 24 5 41z" fill="#3f9bdb"/>
          <path d="M5 41C8 27 17 17 30 12v22C18 38 10 38 5 41z" fill="#3f9bdb"/>
          <path d="M48 11c10 8 12 22 7 33-5 8-14 12-25 12V43c10-2 17-8 20-15 2-6 1-12-2-17z" fill="#f29440"/>
          <path d="M3 44c7 7 18 7 29 1 9-4 18-10 22-18-1 14-11 20-24 23v7h-7v-7C14 53 7 51 3 44z" fill="#f29440"/>
          <path d="M16 25l9-7v16l-6 2V27h-3zM31 15l12-6v18l-8 6V19h-4z" fill="#fff"/>
          <path d="M4 37c8 6 28 6 46-16-2 14-16 23-27 24-9 1-16-2-19-8z" fill="#fff"/>
          <path d="M35 38l8-6v13l-8 5z" fill="#fff"/>
          <path d="M19 10l1.300 3h3l-2.300 2 1 3-3-1.800-3 1.800 1-3-2.300-2h3z" fill="#fff"/>`)}
        <div><div class="site">河东软件园</div><div class="url">www.pc0359.cn</div></div>
      </div>
      <div class="frame"></div>
      <div class="badge">1</div>
      <span class="arrow">${box(140, 90, svg`
        <path d="M6 84L115 22" stroke="#777" stroke-opacity=".45" stroke-width="3"/>
        <path d="M4 81L112 18l-7-3 26-9-12 19-4-3L5 83z" fill="#e01212" stroke="#e01212" stroke-linejoin="round"/>`)}</span>`;
  }
}
